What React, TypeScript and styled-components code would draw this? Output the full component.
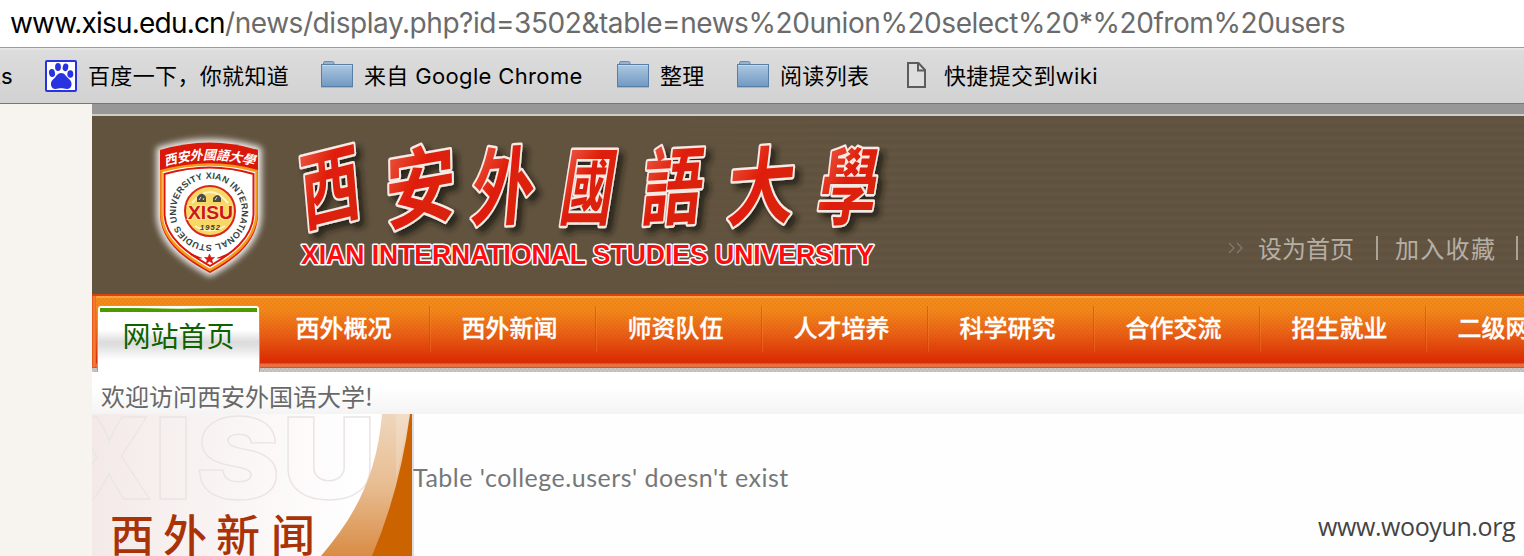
import React from 'react';
import styled, { createGlobalStyle } from 'styled-components';

const cjk = '"Noto Sans CJK SC", sans-serif';

const GlobalStyle = createGlobalStyle`
  body { margin: 0; background: #fefefe; overflow: hidden; }
  * { box-sizing: border-box; }
`;

const Window = styled.div`
  width: 1524px;
  height: 556px;
  overflow: hidden;
  display: flex;
  flex-direction: column;
  white-space: nowrap;
`;

const AddressBar = styled.div`
  height: 48px;
  flex: none;
  padding-left: 10px;
  background: #fff;
  border-bottom: 1px solid #9c9b9f;
  font: 28px/46px Inter, sans-serif;
  color: #6b6b6b;
`;

const Host = styled.span`
  display: inline-block;
  width: 215px;
  color: #000;
  letter-spacing: -0.8px;
`;

const UrlPath = styled.span`
  letter-spacing: -0.44px;
`;

const BookmarksBar = styled.div`
  height: 56px;
  flex: none;
  display: flex;
  align-items: center;
  background: linear-gradient(#e9e9e9 0, #dcdcdc 3px, #d2d2d2);
  border-bottom: 1px solid #777;
  overflow: hidden;
`;

const Bookmark = styled.div<{ $width: number; $gap?: number }>`
  width: ${(p) => p.$width}px;
  flex: none;
  display: flex;
  align-items: center;
  gap: ${(p) => p.$gap ?? 11}px;
  font: 22px/32px Inter, ${cjk};
  letter-spacing: 0.35px;
  color: #000;
  svg { flex: none; }
`;

const CutBookmark = styled(Bookmark)`
  justify-content: flex-end;
  padding-right: 32px;
`;

const Page = styled.div`
  flex: 1;
  display: flex;
  min-height: 0;
`;

const Margin = styled.div`
  width: 92px;
  flex: none;
  background: #f7f4ef;
`;

const Site = styled.div`
  flex: 1;
  min-width: 0;
  display: flex;
  flex-direction: column;
  border-top: 10px solid #979797;
`;

const Header = styled.header`
  height: 180px;
  flex: none;
  display: flex;
  border-top: 2px solid #d0cdc9;
  background:
    linear-gradient(90deg, #62533f 550px, transparent 750px),
    repeating-linear-gradient(#605240 0, #605240 4px, #645541 5px, #645541 8px);
`;

const HeaderLinks = styled.div`
  margin: 116px 0 0 333px;
  height: 32px;
  display: flex;
  align-items: center;
  font: 24px/32px ${cjk};
  color: #b5afa5;
`;

const Chevrons = styled.svg`
  margin-right: 14px;
  flex: none;
`;

const LinkText = styled.span<{ $width: number; $spacing?: number }>`
  width: ${(p) => p.$width}px;
  flex: none;
  letter-spacing: ${(p) => p.$spacing ?? 0}px;
`;

const Bar = styled.i`
  width: 2px;
  height: 24px;
  flex: none;
  margin-right: 17px;
  background: #aaa397;
`;

const Nav = styled.nav`
  height: 78px;
  flex: none;
  display: flex;
  padding-left: 5px;
  background:
    linear-gradient(90deg, #e24b12 0, #f4823a 2px, #ec6426 4px, transparent 4px) 0 2px / 5px 70px no-repeat,
    repeating-conic-gradient(rgba(200, 70, 0, 0.12) 0 25%, transparent 0 50%) 0 4px / 4px 4px,
    linear-gradient(#d8430f 0, #d8430f 1.5px, #ffa64c 2px, #ffa64c 4px, #f48c1a 4.5px, #f28a1a 16px, #e96016 40px,
      #dc2c04 66px, #dc2c04 69px, #ea7444 70px, #e87344 73px, #d65429 73px, #d65429 74px, #c8c8cb 74.5px, #c8c8cb 78px);
`;

const HomeTab = styled.div`
  width: 163px;
  height: 67px;
  flex: none;
  margin-top: 11px;
  border: 1px solid #f58353;
  border-bottom: 0;
  border-radius: 4px 4px 0 0;
  background:
    linear-gradient(90deg, #4f9900, #5aa20f 25%, #d4ecb8 50%, #5aa20f 75%, #4f9900) center 2px / 157px 1px no-repeat,
    linear-gradient(#4f9900, #4f9900) center 3px / 157px 3px no-repeat,
    linear-gradient(#fff 24px, #dcdcdc 36px, #e0e0e0 40px, #fff 54px);
  color: #0d6200;
  font: 28px/58px ${cjk};
  text-align: center;
`;

const NavItem = styled.div`
  position: relative;
  width: 166px;
  flex: none;
  padding-right: 5px;
  font: 500 24px/66px ${cjk};
  color: #fff;
  text-align: center;
  -webkit-text-stroke: 0.3px #fff;
  &::after {
    content: '';
    position: absolute;
    right: -2px;
    top: 12px;
    width: 2px;
    height: 46px;
    background: linear-gradient(90deg, rgba(215, 60, 0, 0.5) 50%, rgba(255, 150, 70, 0.25) 50%);
  }
`;

const FirstNavItem = styled(NavItem)`
  margin-left: 3px;
`;

const Welcome = styled.div`
  height: 42px;
  flex: none;
  padding-left: 9px;
  background: linear-gradient(#fff 35%, #f4f4f4);
  font: 24px/48px ${cjk};
  color: #686868;
`;

const Content = styled.main`
  flex: 1;
  display: flex;
  min-height: 0;
  background: #fefefe;
`;

const Sidebar = styled.aside`
  width: 322px;
  flex: none;
  border-right: 2px solid #dededf;
  background: linear-gradient(90deg, #f3eae8, #fff 270px);
  svg { display: block; }
`;

const Message = styled.p`
  margin: 45px 0 0 -1px;
  width: 905px;
  flex: none;
  font: 25px/36px Lato, sans-serif;
  letter-spacing: 0.5px;
  color: #777;
`;

const Watermark = styled.div`
  margin-top: 94px;
  font: 25px/36px "Open Sans", sans-serif;
  letter-spacing: -0.4px;
  color: #444;
`;

const LogoSvg = styled.svg`
  flex: none;
`;

const PawIcon = () => (
  <svg width="32" height="32" viewBox="0 0 32 32">
    <rect x="1" y="1" width="30" height="30" rx="1" fill="#fff" stroke="#2932e1" strokeWidth="2" />
    <g fill="#2932e1">
      <ellipse cx="7" cy="13" rx="3" ry="4" transform="rotate(-10 7 13)" />
      <ellipse cx="13" cy="7" rx="2.9" ry="4" />
      <ellipse cx="20.5" cy="7.3" rx="2.8" ry="3.9" transform="rotate(10 20.5 7.3)" />
      <ellipse cx="25.3" cy="14" rx="3" ry="3.8" />
      <path d="M16 13c-4 0-4.500 4-8 6.500C4.500 22.500 5.500 29 10.500 29c2 0 3.500-.7 5.500-.7s3.500.7 6 .7c5 0 6-6.500 2.500-9.500C21 16.500 20 13 16 13z" />
    </g>
  </svg>
);

const FolderIcon = () => (
  <svg width="32" height="32" viewBox="0 0 32 32">
    <defs>
      <linearGradient id="folder" x1="0" y1="0" x2="0" y2="1">
        <stop offset="0" stopColor="#adc8e2" />
        <stop offset="1" stopColor="#7199c2" />
      </linearGradient>
    </defs>
    <path d="M2.500 5V3q0-1.500 1.500-1.500h7.500q1.500 0 1.500 1.500V5" fill="#94b3d4" stroke="#6d8dad" />
    <rect x=".5" y="4.500" width="31" height="22" fill="url(#folder)" stroke="#587fa5" />
    <path d="M1 5.500h30" stroke="#c3d8eb" />
    <path d="M0 27.500h32" stroke="#b4b4b4" />
  </svg>
);

const FileIcon = () => (
  <svg width="21" height="29" viewBox="0 0 21 29">
    <path d="M2 2h10.500l6.500 7v17H2z" fill="#dedede" stroke="#5c5c5c" strokeWidth="2" />
    <path d="M12 2v7.500h7" fill="none" stroke="#5c5c5c" strokeWidth="2" />
  </svg>
);

const calligraphy = [
  { c: '西', x: 304, w: 58, r: -14 },
  { c: '安', x: 387, w: 68, r: -10 },
  { c: '外', x: 471, w: 60, r: -4 },
  { c: '國', x: 559, w: 50, r: 0 },
  { c: '語', x: 641, w: 58, r: -3 },
  { c: '大', x: 727, w: 64, r: -4 },
  { c: '學', x: 816, w: 56, r: 0 },
];

const UniversityLogo = () => (
  <LogoSvg width="803" height="178" viewBox="92 116 803 178">
    <defs>
      <filter id="glow" x="-20%" y="-20%" width="140%" height="140%">
        <feGaussianBlur stdDeviation="3" />
      </filter>
      <filter id="drop" x="-20%" y="-20%" width="150%" height="150%">
        <feDropShadow dx="5" dy="5" stdDeviation="3" floodColor="#1c150c" floodOpacity=".8" />
      </filter>
      <linearGradient id="ink" x1="0" y1="0" x2="1" y2="1">
        <stop offset="0" stopColor="#ef6a58" />
        <stop offset=".45" stopColor="#df1f08" />
        <stop offset="1" stopColor="#d62209" />
      </linearGradient>
      <path id="ring" d="M177.500 222A33 33 0 1 1 177.600 222.300" />
      <path id="arch" d="M165 166Q210 153 255 166" />
      <path id="shield" d="M160 150Q210 135 258 150V215C257 243 234 260 210 273C186 260 161 243 160 215Z" />
    </defs>
    <use href="#shield" fill="#fff" stroke="#fff" strokeWidth="7" opacity=".9" filter="url(#glow)" />
    <use href="#shield" fill="#d9180b" />
    <path d="M161.500 171Q210 158 256.500 171V215C255 241 233 257 210 270C187 257 163 241 161.500 215Z" fill="#fff" stroke="#f39a18" strokeWidth="2.500" />
    <path d="M164.500 174Q210 161 253.500 174V215C252 239 231 254 210 266C189 254 166 239 164.500 215Z" fill="#fff" stroke="#d9180b" strokeWidth="2" />
    <text fontFamily='"Noto Sans CJK SC"' fontSize="13" fontWeight="700" fontStyle="italic" fill="#fff">
      <textPath href="#arch" textLength="90">西安外國語大學</textPath>
    </text>
    <text fontFamily="Liberation Sans" fontSize="9" fontWeight="700" fill="#36433f">
      <textPath href="#ring" textLength="203">UNIVERSITY XIAN INTERNATIONAL STUDIES</textPath>
    </text>
    <circle cx="210" cy="211" r="25" fill="#f7d765" stroke="#d9281a" strokeWidth="2" />
    <path d="M192 203q18 -22 36 0M195 226q15 9 30 0" fill="none" stroke="#fff3c0" strokeWidth="2" />
    <path d="M197 202v-5q5-7 9 0v5zM213 202v-4q5-6 8 0v4z" fill="#4c4b44" />
    <path d="M199 200l2-3M203 200l1-2M215 200l2-3" stroke="#ddd" />
    <text x="188" y="219" textLength="45" lengthAdjust="spacingAndGlyphs" fontFamily="Liberation Sans" fontSize="18" fontWeight="700" fill="#cf1712" stroke="#fbe6a0" strokeWidth="2" paintOrder="stroke">XISU</text>
    <text x="200" y="229.500" textLength="20" fontFamily="Liberation Sans" fontSize="7.500" fontWeight="700" fontStyle="italic" fill="#3e3e36">1952</text>
    <path d="M209.500 254l1.500 3.500h3.500l-2.700 2.300 1 3.700-3.300-2.200-3.300 2.200 1-3.700-2.700-2.300h3.500zM188 252q6 7 14 6M231 252q-6 7-14 6" fill="#d9180b" stroke="#d9180b" strokeWidth=".6" />
    <g filter="url(#drop)" fontFamily='"Noto Sans CJK SC"' fontWeight="700" fontSize="78" fill="url(#ink)" stroke="#f7e9e4" strokeWidth="4.500" strokeLinejoin="round" paintOrder="stroke">
      {calligraphy.map(({ c, x, w, r }) => (
        <text key={c} textAnchor="middle" transform={`translate(${x + w / 2} 218) rotate(${r}) skewX(-9) scale(${w / 74} 1.08)`}>
          {c}
        </text>
      ))}
    </g>
    <text x="301" y="264" textLength="573" lengthAdjust="spacingAndGlyphs" fontFamily="Liberation Sans" fontSize="27" fontWeight="700" fill="#fb0d12" stroke="#fff" strokeWidth="3" strokeLinejoin="round" paintOrder="stroke">
      XIAN INTERNATIONAL STUDIES UNIVERSITY
    </text>
  </LogoSvg>
);

const SidebarBanner = () => (
  <svg width="320" height="142" viewBox="0 0 320 142">
    <defs>
      <linearGradient id="ribbon" x1="0" y1="0" x2="0" y2="1">
        <stop offset="0" stopColor="#efd6bc" />
        <stop offset=".5" stopColor="#e8bd92" />
        <stop offset="1" stopColor="#d98c45" />
      </linearGradient>
    </defs>
    <g fontFamily="Inter" fontWeight="900" fontSize="113" fill="none" stroke="#eae5e4" strokeWidth="1.300">
      <text x="-26" y="85" textLength="86" lengthAdjust="spacingAndGlyphs">X</text>
      <text x="62" y="85" textLength="38" lengthAdjust="spacingAndGlyphs">I</text>
      <text x="104" y="85" textLength="84" lengthAdjust="spacingAndGlyphs">S</text>
      <text x="190" y="85" textLength="94" lengthAdjust="spacingAndGlyphs">U</text>
    </g>
    <path d="M290 0C285 62 263 102 229 142H320V0Z" fill="url(#ribbon)" />
    <path d="M304 0V66L318 0Z" fill="#fff" opacity=".18" />
    <path d="M318 0Q308 76 280 142H320V0Z" fill="#cb6400" />
    <text y="138" x="18 71 124 179" fontFamily='"Noto Sans CJK SC"' fontWeight="500" fontSize="44" fill="#a93207">西外新闻</text>
  </svg>
);

const sections = ['西外新闻', '师资队伍', '人才培养', '科学研究', '合作交流', '招生就业', '二级网站'];

export default function App() {
  return (
    <Window>
      <GlobalStyle />
      <AddressBar>
        <Host>www.xisu.edu.cn</Host>
        <UrlPath>/news/display.php?id=3502&amp;table=news%20union%20select%20*%20from%20users</UrlPath>
      </AddressBar>
      <BookmarksBar>
        <CutBookmark $width={45}>ks</CutBookmark>
        <Bookmark $width={276}><PawIcon />百度一下，你就知道</Bookmark>
        <Bookmark $width={296}><FolderIcon />来自 Google Chrome</Bookmark>
        <Bookmark $width={120}><FolderIcon />整理</Bookmark>
        <Bookmark $width={169}><FolderIcon />阅读列表</Bookmark>
        <Bookmark $width={240} $gap={17}><FileIcon />快捷提交到wiki</Bookmark>
      </BookmarksBar>
      <Page>
        <Margin />
        <Site>
          <Header>
            <UniversityLogo />
            <HeaderLinks>
              <Chevrons width="16" height="12" viewBox="0 0 16 12" fill="none" stroke="#857a69" strokeWidth="1.300">
                <path d="M1 1l5 5-5 5M9 1l5 5-5 5" />
              </Chevrons>
              <LinkText $width={118}>设为首页</LinkText>
              <Bar />
              <LinkText $width={121} $spacing={1.3}>加入收藏</LinkText>
              <Bar />
            </HeaderLinks>
          </Header>
          <Nav>
            <HomeTab>网站首页</HomeTab>
            <FirstNavItem>西外概况</FirstNavItem>
            {sections.map((name) => (
              <NavItem key={name}>{name}</NavItem>
            ))}
          </Nav>
          <Welcome>欢迎访问西安外国语大学!</Welcome>
          <Content>
            <Sidebar><SidebarBanner /></Sidebar>
            <Message>Table 'college.users' doesn't exist</Message>
            <Watermark>www.wooyun.org</Watermark>
          </Content>
        </Site>
      </Page>
    </Window>
  );
}
